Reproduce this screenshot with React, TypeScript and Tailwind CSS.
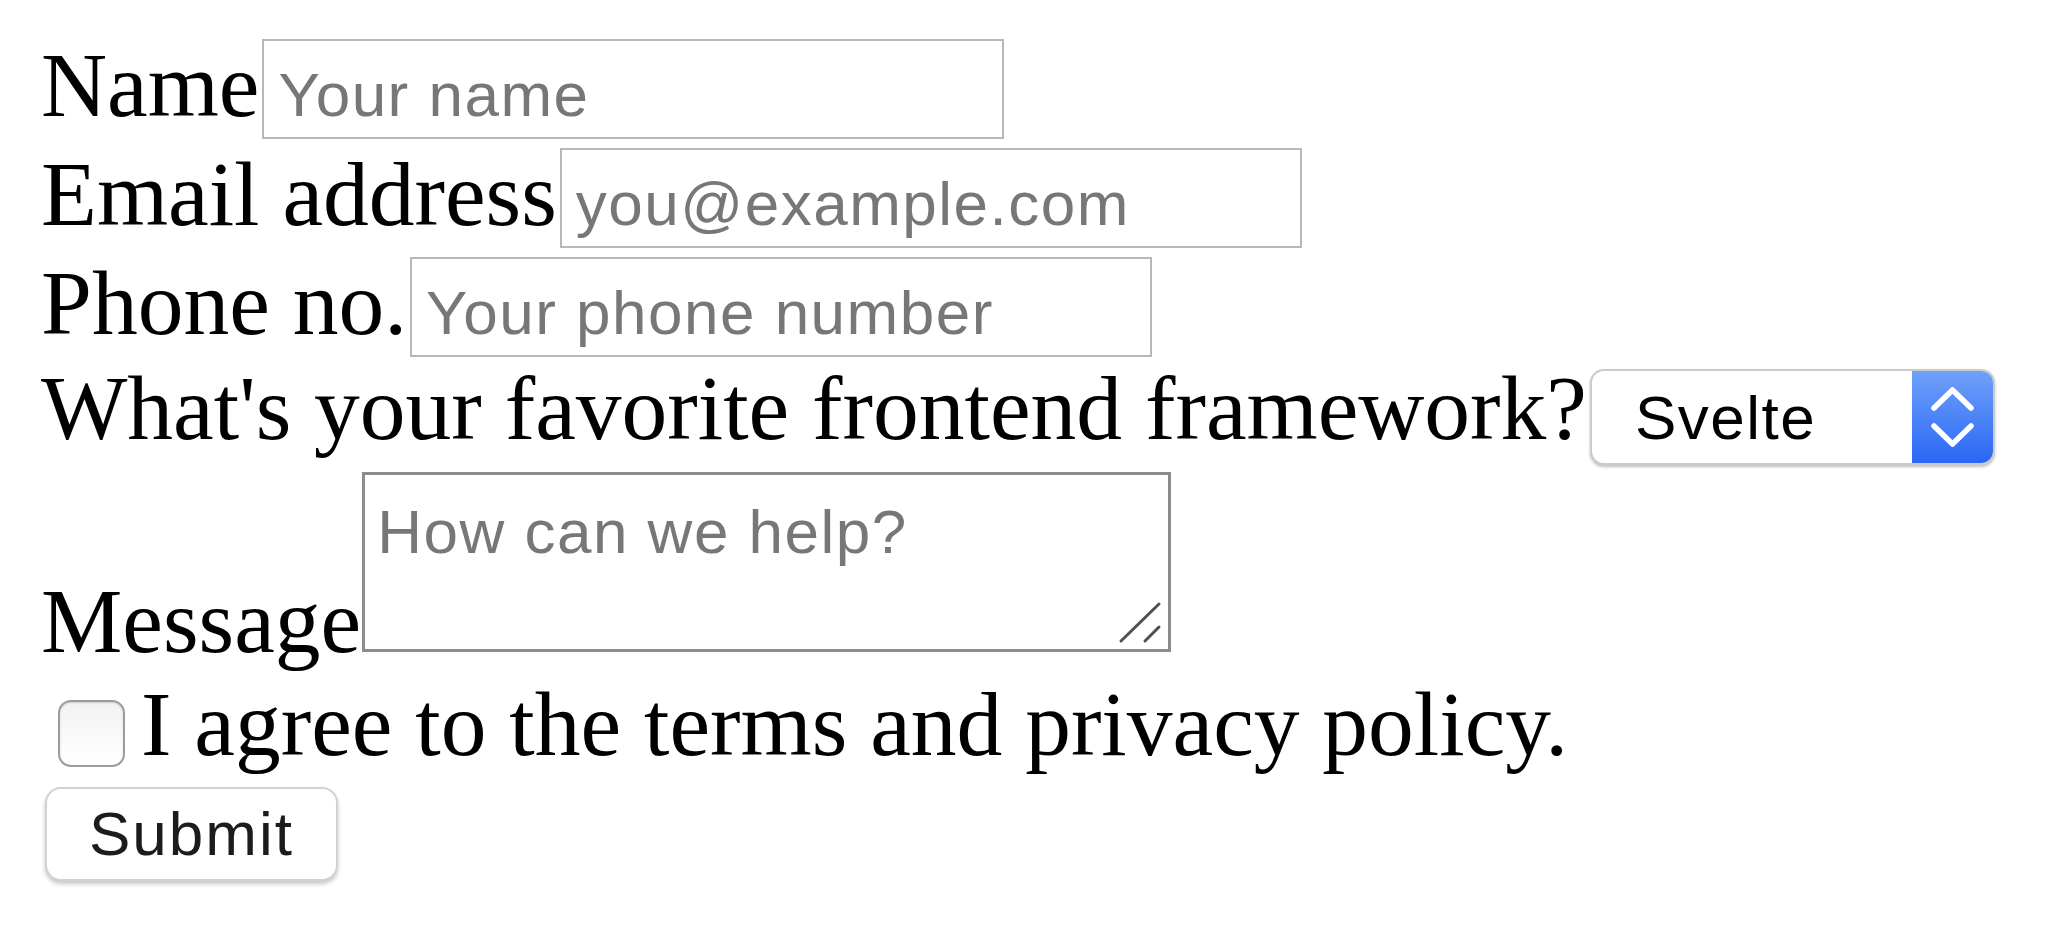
import React, { useState } from 'react';

const serif = "font-['Liberation_Serif','Times_New_Roman',serif]";
const sans = "font-['Liberation_Sans',Arial,sans-serif]";

function TextField({ placeholder, type = 'text' }: { placeholder: string; type?: string }) {
  return (
    <input
      type={type}
      placeholder={placeholder}
      className={`${sans} ml-[3px] box-border h-[100px] w-[742px] border-2 border-[#b8b8b8] bg-white px-[14px] pt-[11px] text-[62px] tracking-[1.5px] text-black outline-none placeholder:text-[#777777]`}
    />
  );
}

export default function App() {
  const [agree, setAgree] = useState(false);

  return (
    <div className={`${serif} min-h-screen bg-white pl-[41px] pt-[39px] text-black`}>
      <form className="flex flex-col items-start gap-[9px]" onSubmit={e => e.preventDefault()}>
        {/* Name */}
        <div className="flex items-baseline">
          <label className="text-[91.5px] leading-none">Name</label>
          <TextField placeholder="Your name" />
        </div>

        {/* Email */}
        <div className="flex items-baseline">
          <label className="text-[91.5px] leading-none">Email address</label>
          <TextField type="email" placeholder="you@example.com" />
        </div>

        {/* Phone */}
        <div className="flex items-baseline">
          <label className="text-[91.5px] leading-none">Phone no.</label>
          <TextField type="tel" placeholder="Your phone number" />
        </div>

        {/* Framework */}
        <div className="-mt-[3px] flex items-baseline">
          <label className="text-[91.5px] leading-none">What's your favorite frontend framework?</label>
          <div className="ml-[3px] box-border flex h-[96px] w-[405px] items-center overflow-hidden rounded-[14px] border-2 border-[#cbcbcb] bg-white shadow-[0_2px_3px_rgba(0,0,0,0.25)]">
            <span className={`${sans} flex-1 pl-[43px] pt-[3px] text-[62px] leading-none tracking-[1.5px] text-black`}>
              Svelte
            </span>
            <span className="flex h-full w-[81px] items-center justify-center bg-linear-to-b from-[#6fa0f9] to-[#2a66f5]">
              <svg width="81" height="92" viewBox="0 0 81 92" fill="none">
                <path d="M22 37 L40.5 19 L59 37" stroke="white" strokeWidth="5.5" strokeLinecap="round" strokeLinejoin="round" />
                <path d="M22 55 L40.5 73 L59 55" stroke="white" strokeWidth="5.5" strokeLinecap="round" strokeLinejoin="round" />
              </svg>
            </span>
          </div>
        </div>

        {/* Message */}
        <div className="-mt-[2px] flex items-end">
          <label className="-mb-[16px] text-[91.5px] leading-none">Message</label>
          <div className="relative ml-[1px]">
            <textarea
              placeholder="How can we help?"
              className={`${sans} box-border block h-[180px] w-[809px] resize-none border-[3px] border-[#8c8c8c] bg-white px-[12px] pt-[10px] text-[62px] tracking-[1.5px] text-black outline-none placeholder:text-[#777777]`}
            />
            <svg className="pointer-events-none absolute bottom-[8px] right-[8px]" width="50" height="50" viewBox="0 0 50 50" fill="none">
              <path d="M46 10 L8 47" stroke="#505050" strokeWidth="3" strokeLinecap="round" />
              <path d="M46 33 L32 47" stroke="#505050" strokeWidth="3" strokeLinecap="round" />
            </svg>
          </div>
        </div>

        {/* Agree */}
        <div className="mt-[18px] flex items-start">
          <input
            type="checkbox"
            checked={agree}
            onChange={e => setAgree(e.target.checked)}
            className="ml-[17px] mr-[16px] mt-[21px] box-border h-[67px] w-[67px] appearance-none rounded-[13px] border-2 border-[#9c9c9c] bg-linear-to-b from-[#f2f2f2] to-white shadow-[inset_0_1px_2px_rgba(0,0,0,0.15)] checked:bg-[#2f6cf5]"
          />
          <label className="text-[91.5px] leading-none">I agree to the terms and privacy policy.</label>
        </div>

        {/* Submit */}
        <button
          type="submit"
          className={`${sans} ml-[4px] mt-[8px] box-border h-[94px] w-[293px] rounded-[16px] border-2 border-[#d2d2d2] bg-white text-[62px] leading-none tracking-[2px] text-[#1c1c1c] shadow-[0_3px_4px_rgba(0,0,0,0.22)]`}
        >
          Submit
        </button>
      </form>
    </div>
  );
}
